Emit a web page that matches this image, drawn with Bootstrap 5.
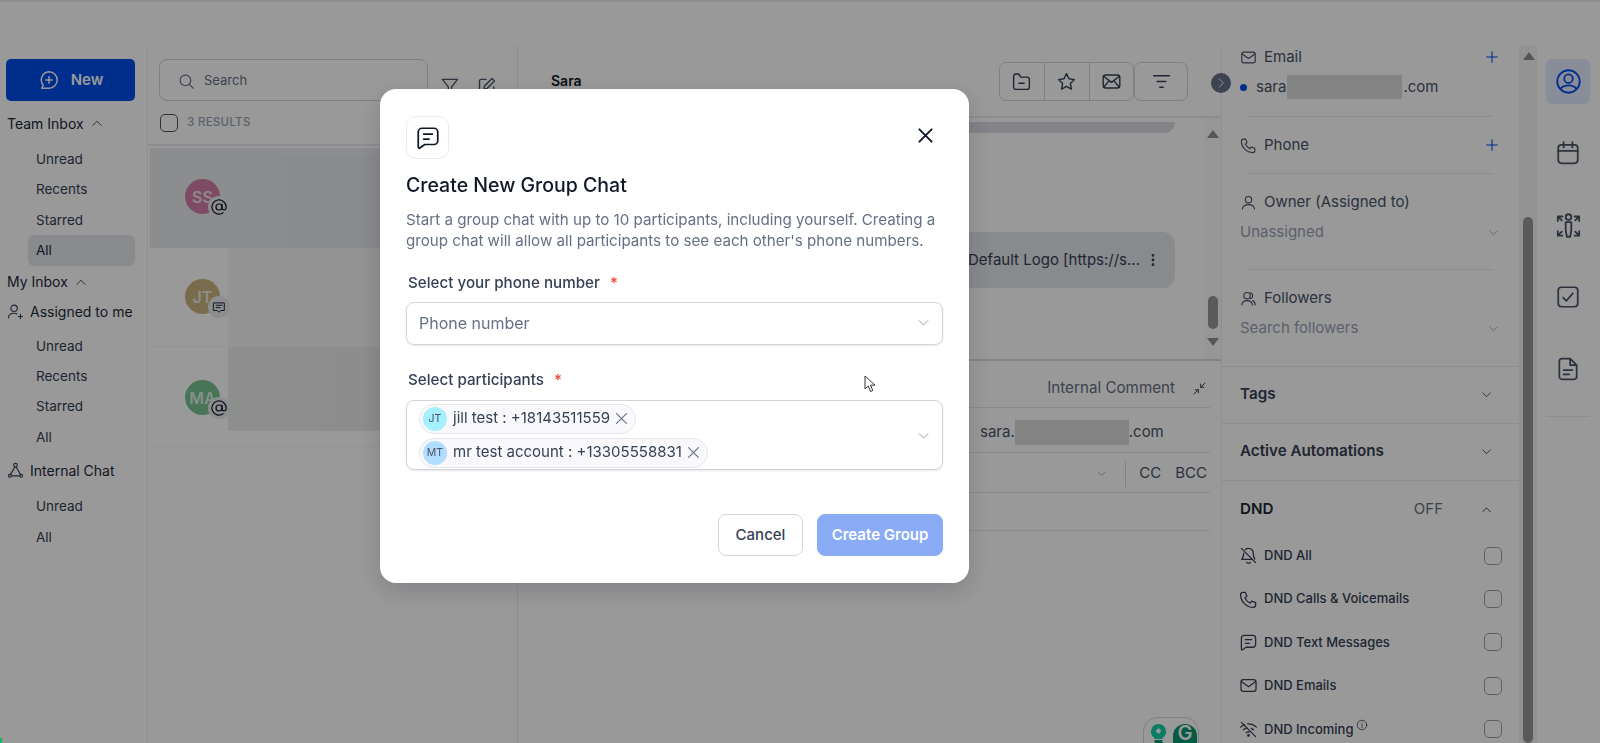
<!DOCTYPE html>
<html lang="en">
<head>
  <meta charset="UTF-8">
  <meta name="viewport" content="width=device-width, initial-scale=1.0">
  <title>Create New Group Chat</title>
  <link href="https://cdn.jsdelivr.net/npm/bootstrap@5.3.0/dist/css/bootstrap.min.css" rel="stylesheet">
  <style>
    body { font-family: Inter, "Liberation Sans", sans-serif; font-size: 15px; color: #344054; background: #fff; overflow: hidden; }
    svg.ico { fill: none; stroke: currentColor; stroke-width: 1.6; stroke-linecap: round; stroke-linejoin: round; flex-shrink: 0; }

    .app-shell { height: 743px; }
    .top-strip { height: 45px; flex-shrink: 0; border-top: 2px solid #eee; }
    .app-main { height: 698px; }

    /* left nav */
    .side-nav { width: 148px; flex-shrink: 0; border-right: 1px solid #f0f1f3; padding: 14px 12px 0 6px; }
    .new-btn { width: 129px; height: 42px; border-radius: 5px; background: #004eeb; border: 0; color: #fff; font-weight: 600; font-size: 15px; gap: 11px; }
    .nav-head { height: 30px; padding-left: 1px; color: #1d2939; gap: 6px; font-size: 14px; white-space: nowrap; }
    .nav-head svg { color: #344054; }
    .nav-first { margin-top: 7px; }
    .nav-sub { margin: 6px 0 0 22px; }
    .nav-sub-tight { margin-top: 4px; }
    .nav-sub + .nav-head { margin-top: 1px; }
    .nav-sub + .nav-head-low { margin-top: 3px; }
    .nav-item { height: 30.400px; padding-left: 8px; border-radius: 6px; font-size: 13.500px; color: #344054; display: flex; align-items: center; }
    .nav-item-on { background: #e4e7ec; color: #1d2939; }

    /* conversation list */
    .list-pane { width: 370px; flex-shrink: 0; border-right: 1px solid #eaecf0; }
    .list-search { width: 269px; height: 42px; margin: 14px 0 0 11px; border: 1px solid #d0d5dd; border-radius: 8px; padding: 2px 0 0 18px; gap: 9px; color: #667085; font-size: 13px; }
    .list-tools { gap: 17px; margin: 31px 0 0 12px; color: #475467; }
    .list-check { height: 45px; padding-left: 12px; gap: 9px; border-bottom: 2px solid #eaecf0; font-size: 11.500px; font-weight: 500; color: #98a2b3; letter-spacing: .3px; }
    .fake-check { width: 18px; height: 18px; border: 1.4px solid #475467; border-radius: 5px; flex-shrink: 0; }
    .conv-row { height: 99px; margin-left: 2px; border-bottom: 1px solid #f2f4f7; }
    .conv-row-on { height: 100px; margin-top: 2px; background: #e9ebee; border-bottom: 0; }
    .conv-row-end { height: 100px; }
    .conv-ava { width: 35px; height: 35px; border-radius: 50%; margin: 31px 0 0 35px; color: rgba(255,255,255,.75); font-size: 16px; font-weight: 600; }
    .conv-row-end .conv-ava { margin-top: 33px; }
    .ava-badge { position: absolute; right: -10px; bottom: -4px; width: 22px; height: 22px; border-radius: 50%; background: #e9ebee; color: #101828; }
    .conv-blur { margin-left: 8px; }
    .blur-a { margin-top: 8px; height: 92px; background: linear-gradient(90deg, #e9ebee, #e4e6e9 40%, #e9ebee); }
    .blur-b { height: 99px; background: linear-gradient(90deg, #f7f7f7, #f2f2f2); }
    .blur-c { height: 84px; background: linear-gradient(90deg, #eceeec, #e8e9e8); }

    /* conversation */
    .conv-pane { width: 703px; flex-shrink: 0; position: relative; }
    .conv-head { height: 73px; border-bottom: 2px solid #eaecf0; padding: 17px 33px 0 33px; font-weight: 600; font-size: 14px; color: #101828; }
    .tool-group { height: 39px; border: 1px solid #d0d5dd; border-radius: 7px; color: #344054; }
    .tool-cell { width: 44.500px; height: 100%; }
    .tool-cell + .tool-cell { border-left: 1px solid #d0d5dd; }
    .conv-tool-gap { margin-left: auto; }
    .conv-body { height: 243px; border-bottom: 2px solid #d8dbe0; }
    .conv-msgs { padding-right: 30px; }
    .bubble-top { height: 11px; margin: 4px 0 0 12px; background: #d9dce2; border-radius: 0 0 12px 12px; }
    .bubble-msg { height: 56px; margin: 99px 0 0 0; padding: 0 14px 0 0; background: #e3e6eb; border-radius: 12px; font-size: 15px; color: #344054; gap: 5px; }
    .bar-track { width: 16px; flex-shrink: 0; background: #f9fafb; padding: 12px 0 11px; }
    .bar-up { width: 0; height: 0; border: 6px solid transparent; border-top: 0; border-bottom: 8px solid #8f8f8f; margin: 0 auto; }
    .bar-down { width: 0; height: 0; border: 6px solid transparent; border-bottom: 0; border-top: 8px solid #8f8f8f; margin: 0 auto; }
    .bar-thumb { width: 10px; border-radius: 5px; background: #969696; margin: 0 auto; }
    .comp-row { margin-right: 11px; border-bottom: 1px solid #e4e7ec; padding-right: 3px; color: #667085; }
    .comp-tabs { height: 47px; padding-top: 8px; font-size: 15.200px; }
    .comp-to { height: 45px; padding: 4px 0 0 462px; font-size: 15px; color: #475467; }
    .comp-cc { height: 40px; padding-top: 2px; font-size: 15px; color: #475467; }
    .comp-subj { height: 38px; }
    .mail-blur { width: 114px; height: 25px; background: #dadbdd; }
    .cc-split { width: 1px; height: 26px; background: #d0d5dd; margin: 0 13px 0 17px; }
    .bcc-lbl { margin-left: 14px; }
    .ext-pill { position: absolute; left: 625px; top: 672px; width: 56px; height: 26px; border: 1px solid #d0d5dd; border-bottom: 0; border-radius: 15px 15px 0 0; gap: 6px; padding: 6px 0 0 6px; overflow: hidden; }
    .ext-g { width: 24px; height: 19px; border-radius: 12px 12px 0 0; background: #08966f; color: #fff; font-size: 20px; font-weight: 600; line-height: 19px; text-align: center; }
    .pane-toggle { position: absolute; left: 693px; top: 28px; width: 20px; height: 20px; border-radius: 50%; background: #667085; color: #fff; z-index: 2; }

    /* contact panel */
    .contact-pane { width: 298px; flex-shrink: 0; border-left: 1px solid #f0f1f3; }
    .info-wrap { padding: 0 19px 0 18px; }
    .info-row { height: 22px; padding-top: 2px; gap: 7px; color: #475467; }
    .info-plus { margin-left: auto; color: #004eeb; }
    .info-value { height: 24px; margin-top: 9px; padding-bottom: 2px; color: #475467; }
    .info-dot { width: 7px; height: 7px; border-radius: 50%; background: #004eeb; margin: 0 9px 0 0; }
    .sel-hint { height: 22px; margin-top: 9px; padding-top: 1px; color: #98a2b3; }
    .sel-hint svg { margin-left: auto; }
    .info-line { height: 1px; background: #eaecf0; margin-left: 8px; margin-right: 7px; }
    .fold-row { height: 57px; padding: 0 26px 1px 18px; border-top: 1px solid #eaecf0; font-size: 15.200px; font-weight: 600; color: #344054; }
    .fold-row svg { margin-left: auto; color: #344054; }
    .dnd-head { height: 54px; padding: 3px 26px 0 18px; border-top: 1px solid #eaecf0; font-size: 15.200px; font-weight: 600; color: #1d2939; }
    .dnd-off { margin-left: auto; margin-right: 37px; font-size: 15px; font-weight: 400; color: #667085; }
    .dnd-row { height: 43.400px; padding: 0 17px 0 17px; gap: 6px; font-size: 13px; font-weight: 500; color: #344054; }
    .dnd-box { width: 18px; height: 18px; margin-left: auto; border: 1.3px solid #98a2b3; border-radius: 5px; }
    .page-bar { width: 18px; flex-shrink: 0; background: #f6f6f7; padding: 7px 4px 0; }
    .page-bar .bar-thumb { height: 526px; margin-top: 157px; }

    /* icon rail */
    .icon-rail { width: 63px; flex-shrink: 0; padding: 14px 10px 0 9px; color: #475467; }
    .rail-btn { height: 72px; }
    .rail-on { height: 45px; margin-bottom: 13px; background: #e4ecff; border-radius: 6px; color: #004eeb; }
    .rail-line { height: 1px; background: #eaecf0; margin-top: 11px; }

    /* dialog over everything */
    .dim-layer { position: fixed; inset: 0; background: rgba(0,0,0,.4); padding: 89px 0 0 380px; z-index: 10; }
    .group-dialog { width: 589px; height: 494px; border: 0; border-radius: 16px; padding: 27px 26px 0; background: #fff; box-shadow: 0 8px 24px rgba(16,24,40,.18); color: #344054; }
    .dialog-ico { width: 43px; height: 43px; border: 1px solid #eaecf0; border-radius: 10px; color: #101828; }
    .dialog-close { width: 21px; height: 21px; margin-top: 8px; margin-right: 7px; padding: 0; background: none; border: 0; color: #101828; }
    .dialog-title { font-size: 19.500px; font-weight: 500; color: #101828; margin: 15px 0 0; line-height: 22px; }
    .dialog-text { font-size: 15.150px; line-height: 21px; color: #667085; margin: 13px 0 0; }
    .field-lbl { font-size: 15.200px; font-weight: 500; color: #344054; margin: 21px 0 0 2px; line-height: 22px; }
    .field-lbl b { color: #f04438; font-weight: 500; margin-left: 6px; }
    .field-box { border: 1px solid #d0d5dd; border-radius: 8px; box-shadow: 0 1px 2px rgba(16,24,40,.1); margin-top: 8px; padding: 0 11px 0 12px; }
    .field-phone { height: 43px; padding-bottom: 2px; font-size: 16px; color: #667085; }
    .field-people { height: 70px; margin-top: 9px; padding: 3px 11px 2px 12px; }
    .field-box > svg { margin-left: auto; color: #98a2b3; }
    .person-chip { height: 30px; padding: 0 5px 0 3px; gap: 6px; background: #f9f9fb; border: 1px solid #e4e7ec; border-radius: 15px; font-size: 15px; color: #344054; align-self: flex-start; }
    .person-chip + .person-chip { margin-top: 4px; }
    .chip-ava { width: 24px; height: 24px; border-radius: 50%; font-size: 10.500px; color: #475467; }
    .chip-x { margin-left: -3px; color: #667085; }
    .dialog-foot { gap: 14px; margin-top: 44px; }
    .btn-cancel, .btn-create { height: 42px; border-radius: 8px; font-size: 15px; padding: 0; }
    .btn-cancel { width: 85px; border: 1px solid #d0d5dd; color: #344054; background: #fff; font-weight: 500; }
    .btn-create { width: 126px; border: 1px solid #8aacf7; color: #fff; background: #8aacf7; font-weight: 600; }
    .mouse-arrow { position: absolute; left: 864px; top: 375px; color: #333; z-index: 11; }
    .corner-mark { position: absolute; left: 0; bottom: 0; width: 2px; height: 5px; background: #12b76a; z-index: 11; }
  </style>
</head>
<body>
  <svg class="d-none">
    <symbol id="i-chat" viewBox="0 0 24 24"><path d="M3 6.500A3.500 3.500 0 0 1 6.500 3h11A3.500 3.500 0 0 1 21 6.500v8a3.500 3.500 0 0 1-3.500 3.500H9l-4.500 3.200c-.7.500-1.500 0-1.500-.8zM8 8.500h8M8 13h5"/></symbol>
    <symbol id="i-chat-plus" viewBox="0 0 24 24"><path d="M12 3a9 9 0 0 1 0 18H4l1.800-3.200A9 9 0 0 1 12 3zM12 8.500v7M8.500 12h7"/></symbol>
    <symbol id="i-up" viewBox="0 0 24 24"><path d="M5 16l7-7 7 7"/></symbol>
    <symbol id="i-down" viewBox="0 0 24 24"><path d="M5 9l7 7 7-7"/></symbol>
    <symbol id="i-user-add" viewBox="0 0 24 24"><circle cx="10" cy="7.500" r="4.500"/><path d="M2 21c.5-4.500 3.500-6.500 8-6.500 1.500 0 2.800.2 4 .8M19 16v6M16 19h6"/></symbol>
    <symbol id="i-tri" viewBox="0 0 24 24"><circle cx="12" cy="4.500" r="2.500"/><circle cx="4" cy="19.500" r="2"/><circle cx="20" cy="19.500" r="2"/><path d="M11 7L5 17.500M13 7l6 10.500M6 19.500h12"/></symbol>
    <symbol id="i-search" viewBox="0 0 24 24"><circle cx="10.500" cy="10.500" r="7.500"/><path d="M16 16l5.500 5.500"/></symbol>
    <symbol id="i-filter" viewBox="0 0 24 24"><path d="M3 4h18l-7 9v6l-4 2v-8z"/></symbol>
    <symbol id="i-edit" viewBox="0 0 24 24"><path d="M11 4H5a2 2 0 0 0-2 2v13a2 2 0 0 0 2 2h13a2 2 0 0 0 2-2v-6M18 3l3 3-9 9-4 1 1-4z"/></symbol>
    <symbol id="i-at" viewBox="0 0 24 24"><circle cx="12" cy="12" r="4"/><path d="M16 8v5.500a2.800 2.800 0 0 0 5.500 0V12a9.500 9.500 0 1 0-4 7.700"/></symbol>
    <symbol id="i-sms" viewBox="0 0 24 24"><path d="M3 5h18v13h-6l-3 3-3-3H3zM7 9h10M7 13h7"/></symbol>
    <symbol id="i-folder" viewBox="0 0 24 24"><path d="M3 6a2.500 2.500 0 0 1 2.500-2.500H9L11 7h7.500A2.500 2.500 0 0 1 21 9.500v9a2.500 2.500 0 0 1-2.500 2.500h-13A2.500 2.500 0 0 1 3 18.500zM9 14h6"/></symbol>
    <symbol id="i-star" viewBox="0 0 24 24"><path d="M12 3l2.800 5.900 6.200.9-4.500 4.500 1.100 6.400L12 17.700l-5.600 3 1.100-6.400L3 9.800l6.200-.9z"/></symbol>
    <symbol id="i-mail-x" viewBox="0 0 24 24"><rect x="2.500" y="4.500" width="19" height="15" rx="3"/><path d="M3 6l9 7 9-7M3 18.500L9.500 11M21 18.500L14.500 11"/></symbol>
    <symbol id="i-mail" viewBox="0 0 24 24"><rect x="2.500" y="4.500" width="19" height="15" rx="3"/><path d="M3 7l9 6.500L21 7"/></symbol>
    <symbol id="i-lines" viewBox="0 0 24 24"><path d="M3 5.500h18M7 12h10M10 18.500h4"/></symbol>
    <symbol id="i-dots" viewBox="0 0 24 24"><circle cx="12" cy="5" r="1.300" fill="currentColor"/><circle cx="12" cy="12" r="1.300" fill="currentColor"/><circle cx="12" cy="19" r="1.300" fill="currentColor"/></symbol>
    <symbol id="i-shrink" viewBox="0 0 24 24"><path d="M21 3l-7 7M14 5v5h5M3 21l7-7M5 14h5v5"/></symbol>
    <symbol id="i-phone" viewBox="0 0 24 24"><path d="M5 3h3l2 5-2.500 2a13 13 0 0 0 6.500 6.500l2-2.500 5 2v3a3 3 0 0 1-3 3C9.500 22 2 14.500 2 6a3 3 0 0 1 3-3z"/></symbol>
    <symbol id="i-plus" viewBox="0 0 24 24"><path d="M12 4v16M4 12h16"/></symbol>
    <symbol id="i-user" viewBox="0 0 24 24"><circle cx="12" cy="8" r="4.500"/><path d="M3.500 21c.5-4 3.500-6 8.500-6s8 2 8.500 6"/></symbol>
    <symbol id="i-users" viewBox="0 0 24 24"><circle cx="10" cy="8" r="4.500"/><path d="M2.500 21c.5-4 3-6 7.500-6s7 2 7.500 6M15 3.800a4.500 4.500 0 0 1 0 8.400M18 15c2 .8 3.200 3 3.500 6"/></symbol>
    <symbol id="i-bell-off" viewBox="0 0 24 24"><path d="M3 3l18 18M8 4.500A6 6 0 0 1 18 9c0 3 .6 5.500 2 7.500M6 9c0 3.500-1 6-2.500 8H17M9.500 20.500a3 3 0 0 0 5 0"/></symbol>
    <symbol id="i-wifi-off" viewBox="0 0 24 24"><path d="M3 3l18 18M2 9a15 15 0 0 1 5-3M22 9a15 15 0 0 0-11-4M5.500 12.500A10 10 0 0 1 10 10M18.500 12.500a10 10 0 0 0-3-2M9 16a5 5 0 0 1 4-1"/><circle cx="12" cy="19.500" r="1"/></symbol>
    <symbol id="i-info" viewBox="0 0 24 24"><circle cx="12" cy="12" r="9.500"/><path d="M12 11v6M12 7.500v.1"/></symbol>
    <symbol id="i-profile" viewBox="0 0 24 24"><circle cx="12" cy="12" r="10"/><circle cx="12" cy="9.500" r="3.800"/><path d="M5 18.500c1.500-2 4-3 7-3s5.500 1 7 3"/></symbol>
    <symbol id="i-cal" viewBox="0 0 24 24"><rect x="3" y="4.500" width="18" height="17" rx="3"/><path d="M3 10h18M8 2v5M16 2v5"/></symbol>
    <symbol id="i-move" viewBox="0 0 24 24"><circle cx="12" cy="4.500" r="2.500"/><path d="M9.500 9h5v7l-1 6h-3l-1-6zM2.500 8V4h4M3 4.500l3 3M21.500 8V4h-4M21 4.500l-3 3M6.500 21h-4v-4M3 20.500l3-3M17.500 21h4v-4M21 20.500l-3-3"/></symbol>
    <symbol id="i-check" viewBox="0 0 24 24"><rect x="3" y="3" width="18" height="18" rx="3"/><path d="M7.500 12.500l3 3 6-7"/></symbol>
    <symbol id="i-doc" viewBox="0 0 24 24"><path d="M6 2.500h8l6 6V19a2.500 2.500 0 0 1-2.500 2.500h-11A2.500 2.500 0 0 1 4 19V5a2.500 2.500 0 0 1 2-2.500zM14 2.500V8.500h6M8 13h8M8 17h5"/></symbol>
    <symbol id="i-x" viewBox="0 0 24 24"><path d="M5 5l14 14M19 5L5 19"/></symbol>
    <symbol id="i-right" viewBox="0 0 24 24"><path d="M9 5l7 7-7 7"/></symbol>
  </svg>

  <div class="app-shell d-flex flex-column">
    <div class="top-strip"></div>
    <div class="app-main d-flex">

      <aside class="side-nav">
        <button class="new-btn btn d-flex align-items-center justify-content-center">
          <svg class="ico" width="22" height="22"><use href="#i-chat-plus"/></svg>New
        </button>
        <div class="nav-head nav-first d-flex align-items-center">Team Inbox <svg class="ico" width="14" height="14"><use href="#i-up"/></svg></div>
        <div class="nav-sub">
          <div class="nav-item">Unread</div>
          <div class="nav-item">Recents</div>
          <div class="nav-item">Starred</div>
          <div class="nav-item nav-item-on">All</div>
        </div>
        <div class="nav-head d-flex align-items-center">My Inbox <svg class="ico" width="14" height="14"><use href="#i-up"/></svg></div>
        <div class="nav-head d-flex align-items-center"><svg class="ico" width="17" height="17"><use href="#i-user-add"/></svg><span>Assigned to me</span></div>
        <div class="nav-sub nav-sub-tight">
          <div class="nav-item">Unread</div>
          <div class="nav-item">Recents</div>
          <div class="nav-item">Starred</div>
          <div class="nav-item">All</div>
        </div>
        <div class="nav-head nav-head-low d-flex align-items-center"><svg class="ico" width="17" height="17"><use href="#i-tri"/></svg><span>Internal Chat</span></div>
        <div class="nav-sub">
          <div class="nav-item">Unread</div>
          <div class="nav-item">All</div>
        </div>
      </aside>

      <section class="list-pane">
        <div class="d-flex">
          <div class="list-search d-flex align-items-center">
            <svg class="ico" width="17" height="17"><use href="#i-search"/></svg>Search
          </div>
          <div class="list-tools d-flex">
            <svg class="ico" width="20" height="20"><use href="#i-filter"/></svg>
            <svg class="ico" width="20" height="20"><use href="#i-edit"/></svg>
          </div>
        </div>
        <div class="list-check d-flex align-items-center"><span class="fake-check"></span>3 RESULTS</div>
        <div class="conv-row conv-row-on d-flex">
          <div class="conv-ava position-relative d-flex align-items-center justify-content-center" style="background:#d07ea6">SS
            <span class="ava-badge d-flex align-items-center justify-content-center"><svg class="ico" width="18" height="18"><use href="#i-at"/></svg></span>
          </div>
          <div class="conv-blur blur-a flex-grow-1"></div>
        </div>
        <div class="conv-row d-flex">
          <div class="conv-ava position-relative d-flex align-items-center justify-content-center" style="background:#c9b57f">JT
            <span class="ava-badge d-flex align-items-center justify-content-center"><svg class="ico" width="14" height="14"><use href="#i-sms"/></svg></span>
          </div>
          <div class="conv-blur blur-b flex-grow-1"></div>
        </div>
        <div class="conv-row conv-row-end d-flex">
          <div class="conv-ava position-relative d-flex align-items-center justify-content-center" style="background:#78c493">MA
            <span class="ava-badge d-flex align-items-center justify-content-center"><svg class="ico" width="18" height="18"><use href="#i-at"/></svg></span>
          </div>
          <div class="conv-blur blur-c flex-grow-1"></div>
        </div>
      </section>

      <section class="conv-pane">
        <div class="conv-head d-flex align-items-start">
          <span class="mt-2">Sara</span>
          <div class="conv-tool-gap d-flex">
            <div class="tool-group d-flex">
              <span class="tool-cell d-flex align-items-center justify-content-center"><svg class="ico" width="21" height="21"><use href="#i-folder"/></svg></span>
              <span class="tool-cell d-flex align-items-center justify-content-center"><svg class="ico" width="21" height="21"><use href="#i-star"/></svg></span>
              <span class="tool-cell d-flex align-items-center justify-content-center"><svg class="ico" width="21" height="21"><use href="#i-mail-x"/></svg></span>
            </div>
            <div class="tool-group d-flex">
              <span class="tool-cell d-flex align-items-center justify-content-center" style="width:52px"><svg class="ico" width="21" height="21"><use href="#i-lines"/></svg></span>
            </div>
          </div>
        </div>
        <span class="pane-toggle d-flex align-items-center justify-content-center"><svg class="ico" width="14" height="14"><use href="#i-right"/></svg></span>
        <div class="conv-body d-flex">
          <div class="conv-msgs flex-grow-1">
            <div class="bubble-top"></div>
            <div class="bubble-msg d-flex align-items-center justify-content-end">
              <span>Default Logo [https://s...</span>
              <svg class="ico" width="16" height="16"><use href="#i-dots"/></svg>
            </div>
          </div>
          <div class="bar-track d-flex flex-column">
            <div class="bar-up"></div>
            <div class="bar-thumb" style="height:33px;margin-top:158px"></div>
            <div class="bar-down" style="margin-top:9px"></div>
          </div>
        </div>
        <div class="comp-row comp-tabs d-flex align-items-center justify-content-end">
          <span>Internal Comment</span>
          <svg class="ico" width="15" height="15" style="margin-left:17px;color:#344054"><use href="#i-shrink"/></svg>
        </div>
        <div class="comp-row comp-to d-flex align-items-center">
          <span>sara.</span><span class="mail-blur"></span><span>.com</span>
        </div>
        <div class="comp-row comp-cc d-flex align-items-center justify-content-end">
          <svg class="ico" width="13" height="13" style="color:#98a2b3"><use href="#i-down"/></svg>
          <span class="cc-split"></span><span>CC</span><span class="bcc-lbl">BCC</span>
        </div>
        <div class="comp-row comp-subj"></div>
        <div class="ext-pill d-flex">
          <svg width="17" height="19" viewBox="0 0 17 19"><path d="M8.500 0a7.500 7.500 0 0 1 4 13.800V15h-8v-1.200A7.500 7.500 0 0 1 8.500 0z" fill="#11d0a7"/><path d="M8.500 4l3 3-3 3-3-3z" fill="#fff"/><rect x="4.500" y="16" width="8" height="3" fill="#08966f"/></svg>
          <span class="ext-g">G</span>
        </div>
      </section>

      <section class="contact-pane">
        <div class="info-wrap">
          <div class="info-row d-flex align-items-center"><svg class="ico" width="17" height="17"><use href="#i-mail"/></svg>Email<svg class="ico info-plus" width="16" height="16"><use href="#i-plus"/></svg></div>
          <div class="info-value d-flex align-items-center"><span class="info-dot"></span>sara<span class="mail-blur" style="width:115px;height:24px;margin:0 1px"></span>.com</div>
          <div class="info-line" style="margin-top:16px"></div>
          <div class="info-row d-flex align-items-center" style="margin-top:16px"><svg class="ico" width="17" height="17"><use href="#i-phone"/></svg>Phone<svg class="ico info-plus" width="16" height="16"><use href="#i-plus"/></svg></div>
          <div class="info-line" style="margin-top:18px"></div>
          <div class="info-row d-flex align-items-center" style="margin-top:16px"><svg class="ico" width="17" height="17"><use href="#i-user"/></svg>Owner (Assigned to)</div>
          <div class="sel-hint d-flex align-items-center">Unassigned<svg class="ico" width="13" height="13"><use href="#i-down"/></svg></div>
          <div class="info-line" style="margin-top:26px"></div>
          <div class="info-row d-flex align-items-center" style="margin-top:16px"><svg class="ico" width="17" height="17"><use href="#i-users"/></svg>Followers</div>
          <div class="sel-hint d-flex align-items-center">Search followers<svg class="ico" width="13" height="13"><use href="#i-down"/></svg></div>
        </div>
        <div class="fold-row d-flex align-items-center" style="margin-top:27px">Tags<svg class="ico" width="13" height="13"><use href="#i-down"/></svg></div>
        <div class="fold-row d-flex align-items-center">Active Automations<svg class="ico" width="13" height="13"><use href="#i-down"/></svg></div>
        <div class="dnd-head d-flex align-items-center">DND<span class="dnd-off">OFF</span><svg class="ico" width="13" height="13"><use href="#i-up"/></svg></div>
        <div class="dnd-row d-flex align-items-center"><svg class="ico" width="19" height="19"><use href="#i-bell-off"/></svg>DND All<span class="dnd-box"></span></div>
        <div class="dnd-row d-flex align-items-center"><svg class="ico" width="19" height="19"><use href="#i-phone"/></svg>DND Calls &amp; Voicemails<span class="dnd-box"></span></div>
        <div class="dnd-row d-flex align-items-center"><svg class="ico" width="19" height="19"><use href="#i-chat"/></svg>DND Text Messages<span class="dnd-box"></span></div>
        <div class="dnd-row d-flex align-items-center"><svg class="ico" width="19" height="19"><use href="#i-mail"/></svg>DND Emails<span class="dnd-box"></span></div>
        <div class="dnd-row d-flex align-items-center"><svg class="ico" width="19" height="19"><use href="#i-wifi-off"/></svg>DND Incoming<svg class="ico mb-2" width="12" height="12" style="margin-left:-3px"><use href="#i-info"/></svg><span class="dnd-box"></span></div>
      </section>

      <div class="page-bar">
        <div class="bar-up"></div>
        <div class="bar-thumb"></div>
      </div>

      <nav class="icon-rail">
        <div class="rail-on d-flex align-items-center justify-content-center"><svg class="ico" width="27" height="27"><use href="#i-profile"/></svg></div>
        <div class="rail-btn d-flex align-items-center justify-content-center"><svg class="ico" width="26" height="26"><use href="#i-cal"/></svg></div>
        <div class="rail-btn d-flex align-items-center justify-content-center"><svg class="ico" width="27" height="27"><use href="#i-move"/></svg></div>
        <div class="rail-btn d-flex align-items-center justify-content-center"><svg class="ico" width="26" height="26"><use href="#i-check"/></svg></div>
        <div class="rail-btn d-flex align-items-center justify-content-center"><svg class="ico" width="26" height="26"><use href="#i-doc"/></svg></div>
        <div class="rail-line"></div>
      </nav>
    </div>
  </div>

  <div class="dim-layer">
    <div class="group-dialog modal-content">
      <div class="d-flex justify-content-between align-items-start">
        <span class="dialog-ico d-flex align-items-center justify-content-center"><svg class="ico" width="26" height="26"><use href="#i-chat"/></svg></span>
        <button class="dialog-close" type="button" aria-label="Close"><svg class="ico" width="21" height="21" style="stroke-width:2.2"><use href="#i-x"/></svg></button>
      </div>
      <h5 class="dialog-title">Create New Group Chat</h5>
      <p class="dialog-text">Start a group chat with up to 10 participants, including yourself. Creating a group chat will allow all participants to see each other's phone numbers.</p>
      <div class="field-lbl">Select your phone number <b>*</b></div>
      <div class="field-box field-phone d-flex align-items-center">Phone number<svg class="ico" width="15" height="15"><use href="#i-down"/></svg></div>
      <div class="field-lbl" style="margin-top:24px">Select participants <b>*</b></div>
      <div class="field-box field-people d-flex align-items-center">
        <div class="d-flex flex-column">
          <span class="person-chip d-inline-flex align-items-center"><span class="chip-ava d-flex align-items-center justify-content-center" style="background:#a5f0fc">JT</span>jill test : +18143511559<svg class="ico chip-x" width="17" height="17"><use href="#i-x"/></svg></span>
          <span class="person-chip d-inline-flex align-items-center"><span class="chip-ava d-flex align-items-center justify-content-center" style="background:#b2ddff">MT</span>mr test account : +13305558831<svg class="ico chip-x" width="17" height="17"><use href="#i-x"/></svg></span>
        </div>
        <svg class="ico" width="15" height="15"><use href="#i-down"/></svg>
      </div>
      <div class="dialog-foot d-flex justify-content-end">
        <button class="btn btn-cancel" type="button">Cancel</button>
        <button class="btn btn-create" type="button">Create Group</button>
      </div>
    </div>
    <svg class="mouse-arrow" width="14" height="18" viewBox="0 0 14 18"><path d="M1 1v13l3.200-3 2.300 5.500 2.300-1-2.300-5.300H11z" fill="#fff" stroke="currentColor" stroke-width="1"/></svg>
    <span class="corner-mark"></span>
  </div>
  <script src="https://cdn.jsdelivr.net/npm/bootstrap@5.3.0/dist/js/bootstrap.bundle.min.js"></script>
</body>
</html>
